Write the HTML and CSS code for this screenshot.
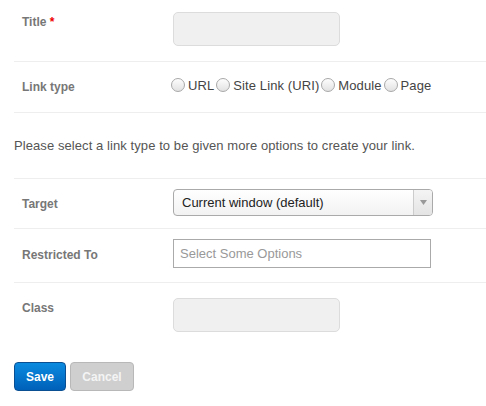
FILE: index.html
```html
<!DOCTYPE html>
<html>
<head>
<meta charset="utf-8">
<link rel="stylesheet" href="styles.css">
</head>
<body>
<form class="form">
  <div class="row row-title">
    <label class="label">Title <span class="req">*</span></label>
    <div class="field"><input class="text" type="text"></div>
  </div>
  <div class="row row-link">
    <label class="label">Link type</label>
    <div class="field radios">
      <span class="radio"></span><span class="rtext">URL</span>
      <span class="radio"></span><span class="rtext">Site Link (URI)</span>
      <span class="radio"></span><span class="rtext">Module</span>
      <span class="radio"></span><span class="rtext">Page</span>
    </div>
  </div>
  <div class="note">Please select a link type to be given more options to create your link.</div>
  <div class="row row-target">
    <label class="label">Target</label>
    <div class="field">
      <div class="select"><span class="select-text">Current window (default)</span><span class="select-arrow"><svg width="7" height="5" viewBox="0 0 7 5"><path d="M0 0h7L3.5 5z" fill="#999"/></svg></span></div>
    </div>
  </div>
  <div class="row row-restrict">
    <label class="label">Restricted To</label>
    <div class="field"><div class="multi">Select Some Options</div></div>
  </div>
  <div class="row row-class">
    <label class="label">Class</label>
    <div class="field"><input class="text" type="text"></div>
  </div>
  <div class="actions">
    <button type="button" class="btn btn-save">Save</button>
    <button type="button" class="btn btn-cancel">Cancel</button>
  </div>
</form>
</body>
</html>
```
FILE: styles.css
```css
html, body { margin: 0; padding: 0; background: #fff; }
body { font-family: "Liberation Sans", Arial, sans-serif; font-size: 13px; color: #333; }
.form { padding-left: 14px; }
.row { display: grid; grid-template-columns: 159px 1fr; border-bottom: 1px solid #eeeeee; }
.label { padding-left: 8px; font-size: 12px; font-weight: bold; color: #777; line-height: 20px; }
.req { color: #e00; }
.row-title { padding: 12px 0 15px; }
.row-link { padding: 14px 0 14px; height: 22px; }
.row-link .label { margin-top: 1px; }
.row-target { padding: 10px 0 12px; }
.row-target .label { margin-top: 5px; }
.row-restrict { padding: 10px 0 14px; }
.row-restrict .label { margin-top: 6px; }
.row-class { padding: 15px 0 0; border-bottom: none; height: 34px; }
.row-class .label { margin-top: 0; }
.text { box-sizing: border-box; width: 167px; height: 34px; margin: 0; background: #f0f0f0; border: 1px solid #dcdcdc; border-radius: 5px; display: block; }
.radios { display: flex; align-items: center; height: 18px; margin-left: -2px; color: #444; font-size: 13px; letter-spacing: 0.1px; }
.radio { box-sizing: border-box; width: 14px; height: 14px; border-radius: 50%; border: 1px solid #a8a8a8; background: linear-gradient(#fdfdfd, #e2e2e2); margin-right: 3px; flex: none; }
.rtext { margin-right: 2px; }
.note { padding: 25px 0 25px; border-bottom: 1px solid #eeeeee; color: #555; line-height: 15px; letter-spacing: 0.08px; }
.select { box-sizing: border-box; width: 260px; height: 27px; border: 1px solid #aaa; border-radius: 4px; background: linear-gradient(#ffffff, #f2f2f2); display: flex; align-items: center; }
.select-text { flex: 1; padding-left: 8px; color: #222; font-size: 13px; }
.select-arrow { width: 18px; height: 100%; border-left: 1px solid #ccc; display: flex; align-items: center; justify-content: center; background: linear-gradient(#f4f4f4, #e4e4e4); border-radius: 0 3px 3px 0; }
.multi { box-sizing: border-box; width: 258px; height: 29px; border: 1px solid #aaa; padding-left: 6px; line-height: 27px; color: #999; font-size: 13px; }
.actions { padding-top: 30px; display: flex; gap: 4px; }
.btn { box-sizing: border-box; height: 29px; border-radius: 4px; font-family: "Liberation Sans", Arial, sans-serif; font-size: 12px; font-weight: bold; padding: 0; }
.btn-save { width: 52px; color: #fff; background: linear-gradient(#0a8be0, #0060b8); border: 1px solid #0a4f92; }
.btn-cancel { width: 64px; color: #f4f4f4; background: #cfcfcf; border: 1px solid #b8b8b8; }
```
